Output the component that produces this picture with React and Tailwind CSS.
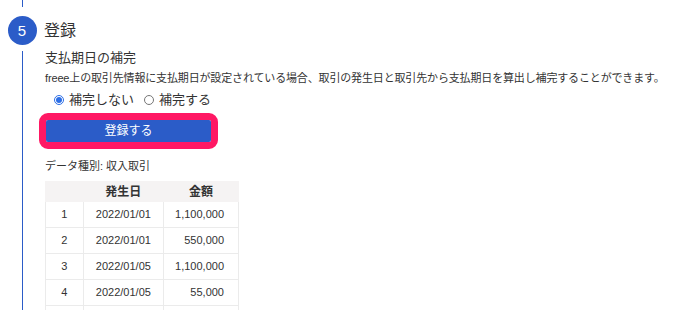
import React from "react";

const rows = [
  ["1", "2022/01/01", "1,100,000"],
  ["2", "2022/01/01", "550,000"],
  ["3", "2022/01/05", "1,100,000"],
  ["4", "2022/01/05", "55,000"],
  ["", "", ""],
];

export default function App() {
  return (
    <div
      className="w-[686px] h-[310px] bg-white overflow-hidden flex text-[#333333]"
      style={{ fontFamily: '"Liberation Sans", "Noto Sans CJK JP", sans-serif' }}
    >
      <div className="w-[44px] flex flex-col items-center shrink-0">
        <div className="h-[7px] w-px bg-[#2b5cc8]" />
        <div className="mt-[9px] w-[29px] h-[29px] rounded-full bg-[#2b5cc8] text-white flex items-center justify-center text-[15px] leading-none">
          5
        </div>
        <div className="mt-[6px] flex-1 w-px bg-[#2b5cc8]" />
      </div>
      <div className="flex flex-col pt-[20px]">
        <div className="text-[16px] leading-[22px]">登録</div>
        <div className="pl-px">
          <div className="mt-[7px] text-[13px] leading-[18px]">支払期日の補完</div>
          <div className="mt-[3px] text-[11px] leading-[16px] tracking-[-0.15px] whitespace-nowrap">
            freee上の取引先情報に支払期日が設定されている場合、取引の発生日と取引先から支払期日を算出し補完することができます。
          </div>
          <div className="mt-[5px] pl-[9px] flex items-center text-[13px] leading-[18px]">
            <span className="w-[10px] h-[10px] rounded-full border border-[#2c6ee6] flex items-center justify-center">
              <span className="w-[6px] h-[6px] rounded-full bg-[#2c6ee6]" />
            </span>
            <span className="ml-[5px]">補完しない</span>
            <span className="ml-[10px] w-[10px] h-[10px] rounded-full border border-[#767676]" />
            <span className="ml-[5px]">補完する</span>
          </div>
          <div className="mt-[4px] ml-[-6px] w-[179px] h-[36px] border-[7px] border-[#ff1864] rounded-[9px] flex">
            <div className="flex-1 bg-[#2b5cc8] rounded-[2px] text-white text-[12px] flex items-center justify-center">
              登録する
            </div>
          </div>
          <div className="mt-[9px] text-[11px] leading-[16px]">データ種別: 収入取引</div>
          <table className="mt-[7px] w-[194px] border-collapse text-[11px]">
            <thead>
              <tr className="h-[20px] bg-[#f5f3f3]">
                <th className="w-[38px] border border-[#f5f3f3]"></th>
                <th className="w-[81px] border border-[#f5f3f3] border-l-white text-[12px] font-bold">発生日</th>
                <th className="w-[75px] border border-[#f5f3f3] border-l-white text-[12px] font-bold">金額</th>
              </tr>
            </thead>
            <tbody>
              {rows.map((r, i) => (
                <tr key={i} className="h-[26px]">
                  <td className="border border-[#ebebeb] text-center">{r[0]}</td>
                  <td className="border border-[#ebebeb] text-center">{r[1]}</td>
                  <td className="border border-[#ebebeb] text-right pr-[14px]">{r[2]}</td>
                </tr>
              ))}
            </tbody>
          </table>
        </div>
      </div>
    </div>
  );
}
